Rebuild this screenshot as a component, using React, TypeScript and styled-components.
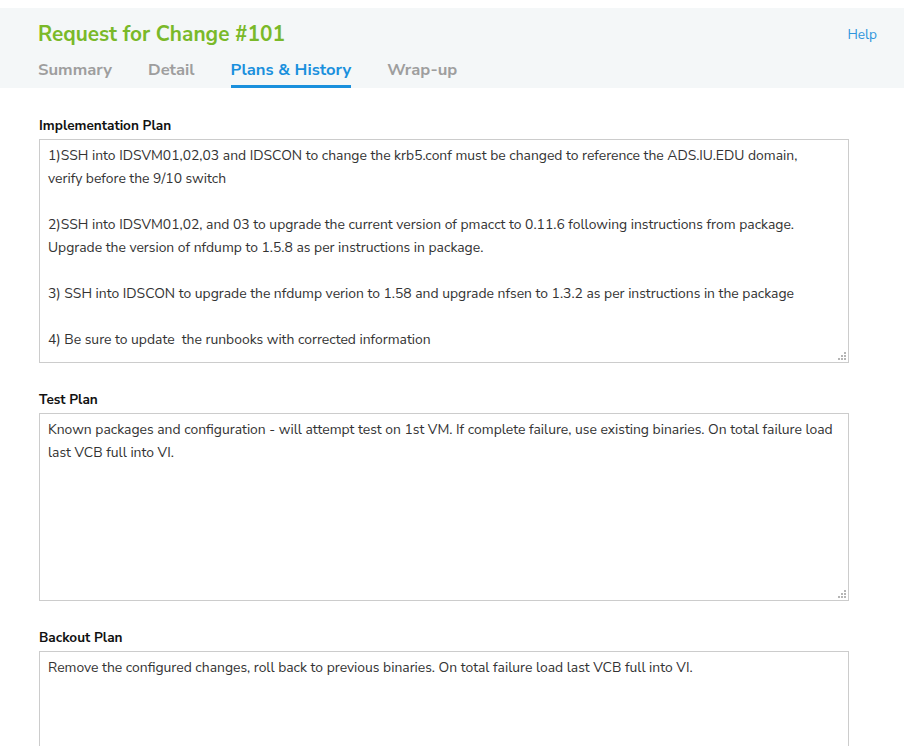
import styled, { createGlobalStyle } from "styled-components";

const GlobalStyle = createGlobalStyle`
  html, body {
    margin: 0;
    padding: 0;
    background: #fff;
  }
  body {
    padding-top: 8px;
    font-family: "Nunito Sans", Lato, "Noto Sans", sans-serif;
    color: #333;
  }
`;

const Header = styled.header`
  background: #f4f7f8;
  height: 80px;
  padding: 0 27px 0 38px;
  display: flex;
  flex-direction: column;
  box-sizing: border-box;
`;

const TitleRow = styled.div`
  display: flex;
  justify-content: space-between;
  align-items: center;
  height: 52px;
`;

const Title = styled.h1`
  margin: 0;
  font-size: 20.8px;
  font-weight: 700;
  color: #7ab929;
`;

const HelpLink = styled.a`
  font-size: 13.6px;
  color: #2f95dc;
  text-decoration: none;
`;

const Tabs = styled.nav`
  display: flex;
  gap: 36px;
  flex: 1;
`;

const Tab = styled.a<{ active?: boolean }>`
  font-size: 16.6px;
  font-weight: 700;
  color: ${(p) => (p.active ? "#1a90dd" : "#9e9e9e")};
  border-bottom: 3px solid ${(p) => (p.active ? "#1a90dd" : "transparent")};
  display: flex;
  align-items: flex-start;
  margin-top: -2px;
  box-sizing: border-box;
  text-decoration: none;
`;

const Content = styled.main`
  padding: 28px 56px 0 39px;
`;

const Field = styled.section`
  display: flex;
  flex-direction: column;
  margin-bottom: 27px;
`;

const Label = styled.label`
  font-size: 13.6px;
  font-weight: 700;
  color: #111;
  margin-bottom: 4px;
`;

const AreaBox = styled.div`
  position: relative;
  width: 810px;
`;

const Area = styled.textarea<{ h: number }>`
  display: block;
  box-sizing: border-box;
  width: 100%;
  height: ${(p) => p.h}px;
  border: 1px solid #cccccc;
  border-radius: 0;
  padding: 4px 13px 4px 8px;
  font-family: inherit;
  font-size: 13.9px;
  line-height: 23px;
  color: #333;
  resize: none;
  outline: none;
  overflow: hidden;
`;

const Grip = styled.svg`
  position: absolute;
  right: 3px;
  bottom: 3px;
  width: 8px;
  height: 8px;
`;

const ResizeGrip = () => (
  <Grip viewBox="0 0 8 8">
    <g fill="#b5b5b5">
      <rect x="6" y="0" width="2" height="2" />
      <rect x="3" y="3" width="2" height="2" />
      <rect x="6" y="3" width="2" height="2" />
      <rect x="0" y="6" width="2" height="2" />
      <rect x="3" y="6" width="2" height="2" />
      <rect x="6" y="6" width="2" height="2" />
    </g>
  </Grip>
);

const implementation = `1)SSH into IDSVM01,02,03 and IDSCON to change the krb5.conf must be changed to reference the ADS.IU.EDU domain, verify before the 9/10 switch

2)SSH into IDSVM01,02, and 03 to upgrade the current version of pmacct to 0.11.6 following instructions from package. Upgrade the version of nfdump to 1.5.8 as per instructions in package.

3) SSH into IDSCON to upgrade the nfdump verion to 1.58 and upgrade nfsen to 1.3.2 as per instructions in the package

4) Be sure to update  the runbooks with corrected information`;

const testPlan =
  "Known packages and configuration - will attempt test on 1st VM. If complete failure, use existing binaries. On total failure load last VCB full into VI.";

const backout =
  "Remove the configured changes, roll back to previous binaries. On total failure load last VCB full into VI.";

const PlanField = ({ label, text, h }: { label: string; text: string; h: number }) => (
  <Field>
    <Label>{label}</Label>
    <AreaBox>
      <Area h={h} readOnly defaultValue={text} />
      <ResizeGrip />
    </AreaBox>
  </Field>
);

export default function App() {
  return (
    <>
      <GlobalStyle />
      <Header>
        <TitleRow>
          <Title>Request for Change #101</Title>
          <HelpLink href="#">Help</HelpLink>
        </TitleRow>
        <Tabs>
          <Tab>Summary</Tab>
          <Tab>Detail</Tab>
          <Tab active>Plans &amp; History</Tab>
          <Tab>Wrap-up</Tab>
        </Tabs>
      </Header>
      <Content>
        <PlanField label="Implementation Plan" text={implementation} h={224} />
        <PlanField label="Test Plan" text={testPlan} h={188} />
        <PlanField label="Backout Plan" text={backout} h={188} />
      </Content>
    </>
  );
}
